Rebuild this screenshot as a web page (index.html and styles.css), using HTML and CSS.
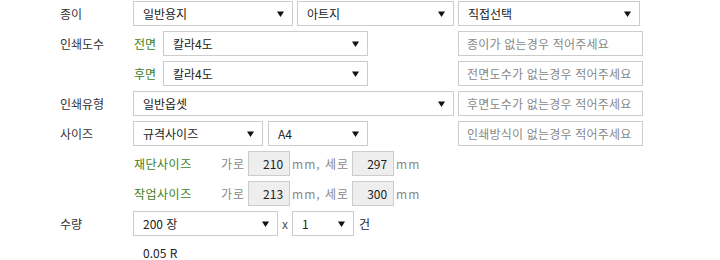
FILE: index.html
```html
<!DOCTYPE html>
<html lang="ko">
  <head>
    <meta charset="UTF-8" />
    <meta name="viewport" content="width=device-width, initial-scale=1.0" />
    <title>인쇄 주문</title>
    <link rel="stylesheet" href="styles.css">
  </head>
  <body>
    <form class="order">
      <div class="row">
        <div class="label">종이</div>
        <div class="field">
          <select class="sel paper-kind"><option>일반용지</option></select>
          <select class="sel paper-name"><option>아트지</option></select>
        </div>
        <div class="side">
          <select class="sel paper-direct"><option>직접선택</option></select>
        </div>
      </div>

      <div class="row">
        <div class="label">인쇄도수</div>
        <div class="field">
          <span class="sub">전면</span>
          <select class="sel color"><option>칼라4도</option></select>
        </div>
        <div class="side">
          <input type="text" class="memo" placeholder="종이가 없는경우 적어주세요">
        </div>
      </div>

      <div class="row">
        <div class="label"></div>
        <div class="field">
          <span class="sub">후면</span>
          <select class="sel color"><option>칼라4도</option></select>
        </div>
        <div class="side">
          <input type="text" class="memo" placeholder="전면도수가 없는경우 적어주세요">
        </div>
      </div>

      <div class="row">
        <div class="label">인쇄유형</div>
        <div class="field">
          <select class="sel print-type"><option>일반옵셋</option></select>
        </div>
        <div class="side">
          <input type="text" class="memo" placeholder="후면도수가 없는경우 적어주세요">
        </div>
      </div>

      <div class="row">
        <div class="label">사이즈</div>
        <div class="field">
          <select class="sel size-kind"><option>규격사이즈</option></select>
          <select class="sel size-name"><option>A4</option></select>
        </div>
        <div class="side">
          <input type="text" class="memo" placeholder="인쇄방식이 없는경우 적어주세요">
        </div>
      </div>

      <div class="row">
        <div class="label"></div>
        <div class="field dims">
          <span class="dim-title">재단사이즈</span>
          <span class="unit">가로</span>
          <input type="text" class="num" value="210">
          <span class="unit">mm, 세로</span>
          <input type="text" class="num" value="297">
          <span class="unit">mm</span>
        </div>
      </div>

      <div class="row">
        <div class="label"></div>
        <div class="field dims">
          <span class="dim-title">작업사이즈</span>
          <span class="unit">가로</span>
          <input type="text" class="num" value="213">
          <span class="unit">mm, 세로</span>
          <input type="text" class="num" value="300">
          <span class="unit">mm</span>
        </div>
      </div>

      <div class="row">
        <div class="label">수량</div>
        <div class="field">
          <select class="sel qty"><option>200 장</option></select>
          <span class="times">x</span>
          <select class="sel count"><option>1</option></select>
          <span class="count-unit">건</span>
        </div>
      </div>

      <div class="row total">
        <div class="label"></div>
        <div class="field">
          <span class="price">0.05 R</span>
        </div>
      </div>
    </form>
  </body>
</html>
```

FILE: styles.css
```css
html,
body {
  margin: 0;
  background: #fff;
  font-family: "Noto Sans CJK KR", "Liberation Sans", sans-serif;
  font-size: 12px;
  color: #333;
}

.order {
  padding: 1px 0 0 60px;
}

.row {
  display: flex;
  align-items: center;
  height: 25px;
  margin-bottom: 5px;
}

.row.total {
  height: 16px;
  margin: 9px 0 0;
}

.label {
  width: 73px;
  flex: none;
  color: #333;
}

.field {
  width: 325px;
  flex: none;
  display: flex;
  align-items: center;
}

.side {
  display: flex;
}

.sel {
  -webkit-appearance: none;
  appearance: none;
  box-sizing: border-box;
  height: 25px;
  margin: 0;
  padding: 0 20px 0 9px;
  border: 1px solid #ccc;
  border-radius: 0;
  background: #fff url("data:image/svg+xml;utf8,<svg xmlns='http://www.w3.org/2000/svg' width='7' height='6'><path d='M0 0.5h7L3.5 6z' fill='%23111'/></svg>") no-repeat right 8px center;
  font-family: inherit;
  font-size: 12px;
  color: #222;
  outline: none;
}

.paper-kind { width: 160px; }
.paper-name { width: 157px; margin-left: 4px; }
.paper-direct { width: 182px; }
.color { width: 205px; }
.print-type { width: 321px; }
.size-kind { width: 130px; }
.size-name { width: 100px; margin-left: 5px; }
.qty { width: 145px; }
.count { width: 62px; }

.sub {
  width: 30px;
  padding-left: 1px;
  box-sizing: border-box;
  color: #3f7e1c;
}

.memo {
  box-sizing: border-box;
  width: 185px;
  height: 25px;
  margin: 0;
  padding: 0 8px;
  border: 1px solid #ccc;
  font-family: inherit;
  font-size: 12px;
  color: #333;
  outline: none;
}
.memo::placeholder {
  color: #888;
  letter-spacing: 0.2px;
}

.dims .dim-title {
  width: 88px;
  padding-left: 1px;
  box-sizing: border-box;
  color: #3f7e1c;
  letter-spacing: 0.5px;
}

.unit {
  color: #888;
  letter-spacing: 1px;
}

.num {
  box-sizing: border-box;
  width: 42px;
  height: 25px;
  margin: 0 2px 0 3px;
  padding: 0 6px 0 0;
  border: 1px solid #ccc;
  background: #eee;
  font-family: inherit;
  font-size: 12px;
  color: #222;
  text-align: right;
  outline: none;
}

.times {
  width: 14px;
  text-align: center;
  color: #555;
}

.count-unit {
  margin-left: 5px;
  color: #222;
}

.price {
  padding-left: 10px;
  line-height: 16px;
  color: #222;
}
```
